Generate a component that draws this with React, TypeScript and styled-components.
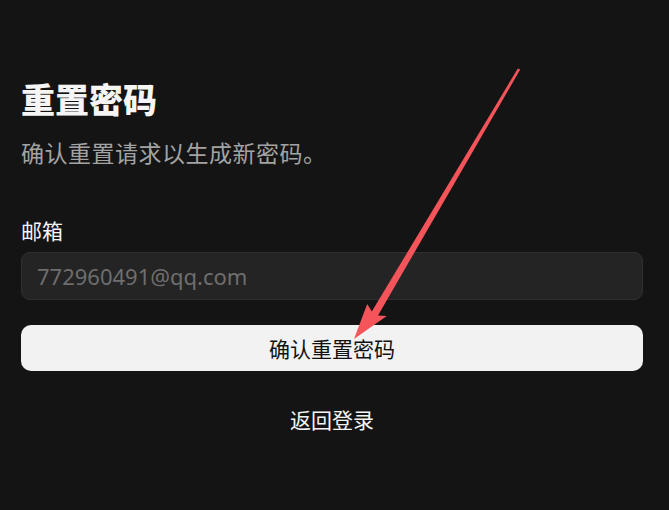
import styled, { createGlobalStyle } from 'styled-components';

const GlobalStyle = createGlobalStyle`
  html, body {
    margin: 0;
    padding: 0;
    background-color: #141414;
  }

  body {
    font-family: 'Noto Sans', 'Noto Sans CJK SC', sans-serif;
  }
`;

const ResetPassword = () => {
  return (
    <Page>
      <GlobalStyle />
      <Form>
        <Title>重置密码</Title>
        <Subtitle>确认重置请求以生成新密码。</Subtitle>
        <Field>
          <Label htmlFor='email'>邮箱</Label>
          <Input id='email' type='email' placeholder='772960491@qq.com' />
        </Field>
        <SubmitButton type='button'>确认重置密码</SubmitButton>
        <BackLink href='#'>返回登录</BackLink>
      </Form>
      <Pointer viewBox='0 0 669 510' width={669} height={510}>
        <polygon
          points='520.2,69.6 378,315.4 386.8,316 354,339 367.2,304 371.8,311.6 517.8,68.4'
          fill='#f4545a'
        />
      </Pointer>
    </Page>
  );
};

const Page = styled.div`
  position: relative;
  width: 669px;
  height: 510px;
  overflow: hidden;
  background-color: #141414;
`;

const Form = styled.div`
  display: flex;
  flex-direction: column;
  padding: 78px 26px 0 21px;
`;

const Title = styled.h1`
  margin: 0;
  color: #f5f5f5;
  font-size: 34px;
  font-weight: 900;
  line-height: 44px;
`;

const Subtitle = styled.p`
  margin: 16px 0 0;
  color: #a3a3a3;
  font-size: 23px;
  letter-spacing: 0.5px;
  line-height: 30px;
`;

const Field = styled.div`
  display: flex;
  flex-direction: column;
  gap: 7px;
  margin-top: 49px;
`;

const Label = styled.label`
  color: #f5f5f5;
  font-size: 21px;
  line-height: 28px;
`;

const Input = styled.input`
  box-sizing: border-box;
  width: 100%;
  height: 48px;
  padding: 0 15px;
  border: 1px solid #303030;
  border-radius: 9px;
  background-color: #242424;
  color: #e5e5e5;
  font-family: inherit;
  font-size: 22px;
  outline: none;

  &::placeholder {
    color: #6e6e6e;
  }
`;

const SubmitButton = styled.button`
  height: 46px;
  margin-top: 25px;
  border: none;
  border-radius: 10px;
  background-color: #f2f2f2;
  color: #111111;
  font-family: inherit;
  font-size: 21px;
  cursor: pointer;
`;

const BackLink = styled.a`
  align-self: center;
  margin-top: 35px;
  color: #f5f5f5;
  font-size: 21px;
  line-height: 28px;
  text-decoration: none;
`;

const Pointer = styled.svg`
  position: absolute;
  top: 0;
  left: 0;
  pointer-events: none;
`;

export default ResetPassword;
